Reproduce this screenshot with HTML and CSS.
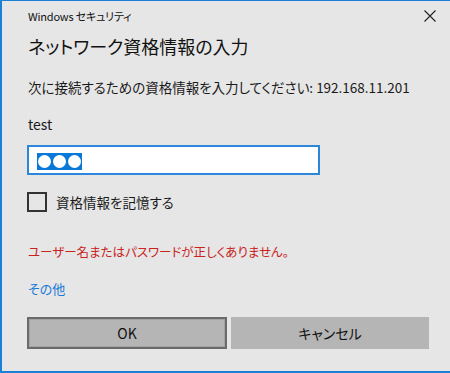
FILE: index.html
```html
<!DOCTYPE html>
<html lang="ja">
<head>
<meta charset="utf-8">
<title>Windows セキュリティ</title>
<link rel="stylesheet" href="styles.css">
</head>
<body>
<div class="dialog">
  <div class="titlebar">
    <span class="app-name">Windows セキュリティ</span>
    <svg class="close" width="12" height="12" viewBox="0 0 12 12" aria-hidden="true">
      <path d="M0.5 0.5 L11.5 11.5 M11.5 0.5 L0.5 11.5" stroke="#222" stroke-width="1.1" fill="none"/>
    </svg>
  </div>
  <div class="heading">ネットワーク資格情報の入力</div>
  <div class="prompt">次に接続するための資格情報を入力してください: 192.168.11.201</div>
  <div class="user">test</div>
  <div class="password">
    <span class="selection"><span class="dot"></span><span class="dot"></span><span class="dot"></span></span>
  </div>
  <label class="remember">
    <span class="checkbox"></span>
    <span class="remember-text">資格情報を記憶する</span>
  </label>
  <div class="error">ユーザー名またはパスワードが正しくありません。</div>
  <div class="more">その他</div>
  <div class="buttons">
    <div class="btn btn-default">OK</div>
    <div class="btn">キャンセル</div>
  </div>
</div>
</body>
</html>
```

FILE: styles.css
```css
html, body {
  margin: 0;
  padding: 0;
  background: #e6e6e6;
}

.dialog {
  box-sizing: border-box;
  width: 450px;
  height: 373px;
  background: #e6e6e6;
  border-top: 1px solid #1a80d8;
  border-left: 2px solid #1a80d8;
  border-bottom: 2px solid #1a80d8;
  padding: 0 22px 0 25px;
  font-family: "Noto Sans CJK JP", "Noto Sans", sans-serif;
  font-feature-settings: "palt";
  color: #1a1a1a;
  display: flex;
  flex-direction: column;
}

.titlebar {
  height: 30px;
  display: flex;
  align-items: center;
  justify-content: space-between;
  margin-right: -8px;
}

.app-name {
  font-size: 11px;
  letter-spacing: -0.2px;
  line-height: 30px;
  padding-left: 1px;
  color: #111;
}

.close {
  display: block;
}

.heading {
  font-size: 18px;
  line-height: 30px;
  color: #111;
  padding-left: 1px;
}

.prompt {
  margin-top: 16px;
  font-size: 13.5px;
  line-height: 20px;
  padding-left: 1px;
}

.user {
  margin-top: 17px;
  font-size: 14px;
  line-height: 20px;
  padding-left: 1px;
}

.password {
  margin-top: 11px;
  box-sizing: border-box;
  width: 293px;
  height: 30px;
  background: #fff;
  border: 2px solid #2b87dc;
  padding: 6px 0 0 8px;
}

.selection {
  display: flex;
  align-items: center;
  width: 45px;
  height: 17px;
  background: #0a78d8;
  padding-left: 1px;
  gap: 2px;
  box-sizing: border-box;
}

.dot {
  width: 13px;
  height: 13px;
  border-radius: 50%;
  background: #fff;
}

.remember {
  margin-top: 17px;
  display: flex;
  align-items: center;
  height: 20px;
  gap: 9px;
}

.checkbox {
  box-sizing: border-box;
  width: 20px;
  height: 20px;
  border: 2px solid #333;
}

.remember-text {
  font-size: 13.5px;
  line-height: 20px;
}

.error {
  margin-top: 30px;
  font-size: 12.5px;
  line-height: 20px;
  color: #c8231c;
  padding-left: 1px;
}

.more {
  margin-top: 17px;
  font-size: 13px;
  line-height: 20px;
  color: #1a7bd8;
  padding-left: 1px;
}

.buttons {
  margin-top: 18px;
  display: grid;
  grid-template-columns: 200px 198px;
  gap: 4px;
}

.btn {
  box-sizing: border-box;
  height: 32px;
  background: #b5b5b5;
  border: 2px solid #b5b5b5;
  display: flex;
  align-items: center;
  justify-content: center;
  font-size: 14px;
  color: #111;
}

.btn-default {
  border-color: #6a6a6a;
  box-shadow: inset 0 0 0 1px #a3a3a3;
}
```
